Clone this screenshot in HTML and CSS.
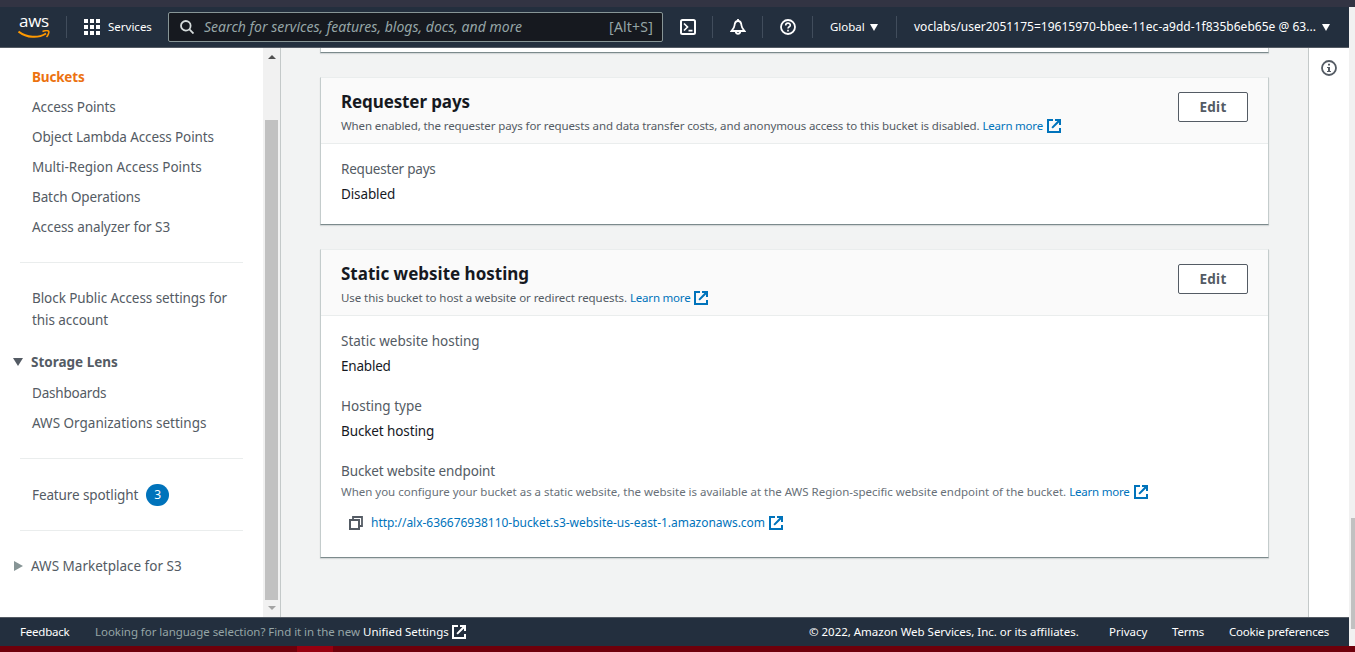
FILE: index.html
```html
<!DOCTYPE html>
<html lang="en">
<head>
<meta charset="utf-8">
<title>S3 bucket properties</title>
<link rel="stylesheet" href="styles.css">
</head>
<body>
<svg class="defs" width="0" height="0">
  <symbol id="ext" viewBox="0 0 14 14"><path d="M6 1H1v12h12V9" fill="none" stroke="currentColor" stroke-width="2"/><path d="M8 0h6v6h-2V3.6L5.8 9.6 4.4 8.2 10.4 2H8z" fill="currentColor"/></symbol>
</svg>
<div class="strip"></div>
<div class="window">
  <div class="console">
    <header class="topnav">
      <div class="logo"><span class="logo-text">aws</span><svg class="smile" width="32" height="9" viewBox="0 0 32 9"><path d="M.5 1.500C9 8 20 8.500 28 3.500" fill="none" stroke="#f90" stroke-width="2"/><path d="M24.500 1.500C27 .6 30 .5 30.700 1.300S30 5.500 28.500 7" fill="none" stroke="#f90" stroke-width="1.500"/></svg></div>
      <i class="sep"></i>
      <svg class="grid" width="16" height="16" viewBox="0 0 16 16" fill="#fff"><path d="M0 0h4v4H0zM6 0h4v4H6zM12 0h4v4h-4zM0 6h4v4H0zM6 6h4v4H6zM12 6h4v4h-4zM0 12h4v4H0zM6 12h4v4H6zM12 12h4v4h-4z"/></svg>
      <span class="services">Services</span>
      <div class="search">
        <svg width="14" height="14" viewBox="0 0 14 14" fill="none" stroke="#d5dbdb" stroke-width="1.800"><circle cx="5.800" cy="5.800" r="4.800"/><path d="M9.200 9.200l4.300 4.300"/></svg>
        <span class="placeholder">Search for services, features, blogs, docs, and more</span>
        <span class="shortcut">[Alt+S]</span>
      </div>
      <div class="tool"><svg width="16" height="16" viewBox="0 0 16 16" fill="none" stroke="#fff" stroke-width="2"><rect x="1" y="1" width="14" height="14" rx="1.500"/><path d="M4 4.500L7.500 8 4 11.500M8.500 11.700H12.500" stroke-width="1.700"/></svg></div>
      <div class="tool"><svg width="16" height="16" viewBox="0 0 16 16" fill="none" stroke="#fff" stroke-width="1.800"><path d="M8 0v2M8 2C5.200 2 4.700 4.200 4.500 6.500S3 10 1.500 12h13C13 10 11.700 8.800 11.500 6.500S10.800 2 8 2z"/><path d="M5.800 12.500c0 3 4.400 3 4.400 0"/></svg></div>
      <div class="tool"><svg width="16" height="16" viewBox="0 0 16 16" fill="none" stroke="#fff" stroke-width="1.800"><circle cx="8" cy="8" r="7"/><path d="M5.700 6.400C5.700 3.300 10.300 3.500 10.300 6.200 10.300 7.800 8 7.700 8 9.600M8 10.800v1.600" stroke-width="1.600"/></svg></div>
      <div class="region"><span class="global">Global</span><i class="tri"></i></div>
      <div class="account"><span class="user">voclabs/user2051175=19615970-bbee-11ec-a9dd-1f835b6eb65e @ 63...</span><i class="tri"></i></div>
    </header>
    <div class="middle">
      <nav class="sidebar">
        <div class="links">
          <a class="link active">Buckets</a>
          <a class="link snug">Access Points</a>
          <a class="link snug">Object Lambda Access Points</a>
          <a class="link">Multi-Region Access Points</a>
          <a class="link snug">Batch Operations</a>
          <a class="link slight">Access analyzer for S3</a>
        </div>
        <div class="links group2">
          <a class="link two slight">Block Public Access settings for<br>this account</a>
          <div class="section"><i class="tri dark"></i><b>Storage Lens</b></div>
          <a class="link tight">Dashboards</a>
          <a class="link">AWS Organizations settings</a>
        </div>
        <div class="links group3"><a class="link feature"><span class="snug">Feature spotlight</span><span class="badge">3</span></a></div>
        <div class="links group4"><div class="section"><i class="tri-right"></i><span>AWS Marketplace for S3</span></div></div>
      </nav>
      <div class="sidebar-scroll"><i class="up"></i><i class="thumb"></i><i class="down"></i></div>
      <main class="main">
        <section class="card stub"></section>
        <section class="card">
          <div class="card-head">
            <div><h2 class="snug">Requester pays</h2>
            <p class="desc"><span class="snug">When enabled, the requester pays for requests and data transfer costs, and anonymous access to this bucket is disabled.</span><a>Learn more</a><svg class="ext"><use href="#ext"/></svg></p></div>
            <button class="edit">Edit</button>
          </div>
          <dl class="card-body"><dt class="tight">Requester pays</dt><dd class="snug">Disabled</dd></dl>
        </section>
        <section class="card">
          <div class="card-head">
            <div><h2>Static website hosting</h2>
            <p class="desc"><span class="slight">Use this bucket to host a website or redirect requests.</span><a>Learn more</a><svg class="ext"><use href="#ext"/></svg></p></div>
            <button class="edit">Edit</button>
          </div>
          <dl class="card-body"><dt>Static website hosting</dt><dd class="tight">Enabled</dd>
          <dt>Hosting type</dt><dd class="snug">Bucket hosting</dd>
          <dt class="snug">Bucket website endpoint</dt></dl>
          <p class="desc hint"><span>When you configure your bucket as a static website, the website is available at the AWS Region-specific website endpoint of the bucket.</span><a>Learn more</a><svg class="ext"><use href="#ext"/></svg></p>
          <p class="endpoint"><svg width="14" height="14" viewBox="0 0 14 14" fill="none" stroke="#545b64" stroke-width="2"><path d="M1 4h9v9H1z"/><path d="M4 4V1h9v9h-3" stroke-width="1.800"/></svg><a>http://alx-636676938110-bucket.s3-website-us-east-1.amazonaws.com</a><svg class="ext"><use href="#ext"/></svg></p>
        </section>
      </main>
      <aside class="info"><svg width="16" height="16" viewBox="0 0 16 16" fill="none" stroke="#545b64" stroke-width="1.800"><circle cx="8" cy="8" r="7"/><path d="M7 3.800h2v1.700H7zM6 7h3v4h1v1H6v-1h1V8H6z" fill="#545b64" stroke="none"/></svg></aside>
    </div>
    <footer class="footer">
      <span class="feedback tight">Feedback</span>
      <span class="muted">Looking for language selection? Find it in the new</span>
      <span class="unified">Unified Settings</span><svg class="ext"><use href="#ext"/></svg>
      <span class="copy">© 2022, Amazon Web Services, Inc. or its affiliates.</span>
      <span class="privacy">Privacy</span><span class="terms tight">Terms</span><span class="tight">Cookie preferences</span>
    </footer>
  </div>
  <div class="page-scroll"><i></i></div>
</div>
<div class="taskbar"><i></i></div>
</body>
</html>
```
FILE: styles.css
```css
* { box-sizing: border-box; }
body { margin: 0; width: 1355px; height: 652px; overflow: hidden; font: 13.5px/22px "Noto Sans", sans-serif; color: #16191f; background: #f2f3f3; }
.defs { position: absolute; }
i { display: block; flex: none; }
svg { flex: none; display: block; }
h2, p, dl, dd { margin: 0; }
.slight { letter-spacing: -0.07px; }
.snug { letter-spacing: -0.113px; }
.tight { letter-spacing: -0.21px; }
.strip { height: 7px; background: #323443; }
.window { display: flex; height: 639px; }
.console { width: 1349px; display: flex; flex-direction: column; }
.page-scroll { flex: 1; background: #f1f1f1; padding: 511px 0 0 2px; }
.page-scroll i { height: 111px; background: #c1c1c1; }
.taskbar { height: 6px; background: #6f000b; padding-left: 297px; }
.taskbar i { width: 36px; height: 6px; background: #97000f; }

.topnav { height: 41px; flex: none; background: #232f3e; border-bottom: 1px solid #545b64; display: flex; align-items: center; color: #fff; white-space: nowrap; }
.logo { width: 32px; height: 24px; margin-left: 18px; position: relative; }
.logo-text { position: absolute; left: 1px; top: -4px; font: 500 17px/20px "Open Sans", sans-serif; letter-spacing: -0.3px; }
.smile { position: absolute; left: 0; top: 15px; }
.sep { width: 1px; height: 22px; background: #414d5c; margin: 0 17px 0 16px; }
.services { font-size: 11.5px; margin-left: 8px; width: 60px; }
.search { width: 495px; height: 30px; border: 1px solid #879596; border-radius: 2px; background: #16191f; display: flex; align-items: center; padding: 0 9px 0 11px; color: #95a5a6; font-size: 14px; }
.placeholder { font-style: italic; margin-left: 10px; letter-spacing: 0.023px; }
.shortcut { margin-left: auto; letter-spacing: 0.2px; }
.tool { width: 50px; height: 22px; border-right: 1px solid #414d5c; display: flex; justify-content: center; align-items: center; }
.region { width: 84px; height: 22px; border-right: 1px solid #414d5c; display: flex; align-items: center; padding-left: 17px; }
.account { display: flex; align-items: center; padding-left: 17px; }
.global { font-size: 11.5px; width: 40px; }
.user { font-size: 12px; letter-spacing: 0.023px; width: 408px; }
.tri { border: 4px solid transparent; border-top: 7px solid #fff; border-bottom: 0; }

.middle { flex: 1; display: flex; min-height: 0; }
.sidebar { width: 263px; background: #fff; padding: 14px 20px 0; color: #545b64; white-space: nowrap; }
.links { border-bottom: 1px solid #eaeded; width: 223px; height: 201px; }
.link { display: block; height: 30px; line-height: 31px; padding-left: 12px; }
.active { color: #ec7211; font-weight: 700; letter-spacing: -0.18px; }
.group2 { height: 196px; padding-top: 24px; }
.two { height: 64px; line-height: 22px; }
.section { height: 27px; display: flex; margin-left: -7px; }
.section b, .section span { margin-left: 8px; }
.dark { border-width: 8px 5px 0; border-top-color: #545b64; margin-top: 7px; }
.group3 { height: 72px; padding-top: 21px; }
.feature { display: flex; align-items: center; }
.badge { width: 23px; height: 22px; border-radius: 11px; background: #0073bb; color: #fff; font-size: 12px; line-height: 22px; text-align: center; margin-left: 8px; }
.group4 { height: auto; border: 0; padding-top: 24px; }
.tri-right { width: 9px; height: 10px; border: 5px solid transparent; border-left: 9px solid #879596; border-right: 0; margin: 6px 0 0 1px; }
.sidebar-scroll { width: 18px; border-right: 1px solid #c4c9c9; background: #f1f1f1; padding: 7px 1px 0 2px; display: flex; flex-direction: column; }
.up { width: 8px; margin-left: 3px; border: 4px solid transparent; border-bottom-color: #505050; border-top: 0; }
.thumb { height: 480px; width: 13px; background: #c1c1c1; margin-top: 61px; }
.down { width: 8px; margin: 6px 0 0 3px; border: 4px solid transparent; border-top-color: #a3a3a3; border-bottom: 0; }

.main { width: 1027px; padding: 0 39px; background: #f2f3f3; }
.card { width: 949px; background: #fff; border: 1px solid #c4cccc; border-top-color: #eaeded; border-bottom-color: #7c8a8c; margin-bottom: 24px; white-space: nowrap; box-shadow: 0 1px 1px rgba(0, 28, 36, 0.12); }
.stub { height: 5px; border-top: 0; }
.card-head { height: 66px; background: #fafafa; border-bottom: 1px solid #eaeded; padding: 13px 20px 0; display: flex; justify-content: space-between; }
h2 { font-size: 17px; line-height: 22px; font-weight: 700; }
.desc { font-size: 11.5px; line-height: 16px; margin-top: 5px; display: flex; color: #545b64; }
.desc a, .endpoint a { color: #0073bb; margin-left: 3px; }
.desc a { letter-spacing: -0.21px; }
.ext { width: 14px; height: 14px; margin: 1px 0 0 4px; color: #0073bb; }
.edit { width: 70px; height: 30px; margin-top: 1px; border: 1px solid #545b64; border-radius: 2px; background: #fff; font: 700 13.5px/20px "Noto Sans", sans-serif; letter-spacing: 0.3px; color: #545b64; padding: 0; }
.card-body { padding: 14px 20px 1px; }
dt { color: #545b64; height: 22px; }
dd { margin: 3px 0 18px; height: 22px; }
.hint { padding-left: 20px; margin-top: 1px; color: #687078; letter-spacing: -0.014px; }
.endpoint { display: flex; align-items: center; padding: 0 0 23px 28px; margin-top: 12px; font-size: 12px; letter-spacing: -0.03px; }
.endpoint a { margin-left: 8px; }
.endpoint .ext { margin-top: 0; }

.info { width: 41px; border-left: 1px solid #c4c9c9; background: #fff; padding: 12px 0 0 12px; }
.footer { height: 29px; flex: none; border-top: 1px solid #545b64; background: #232f3e; color: #fff; font-size: 11.5px; display: flex; align-items: center; padding-left: 20px; white-space: nowrap; }
.feedback { width: 75px; }
.muted { width: 268px; color: #95a5a6; letter-spacing: -0.045px; }
.unified { width: 86px; }
.footer .ext { color: #fff; margin: 0 0 0 3px; }
.copy { margin-left: 343px; width: 300px; letter-spacing: -0.02px; }
.privacy { width: 63px; }
.terms { width: 57px; }
```
